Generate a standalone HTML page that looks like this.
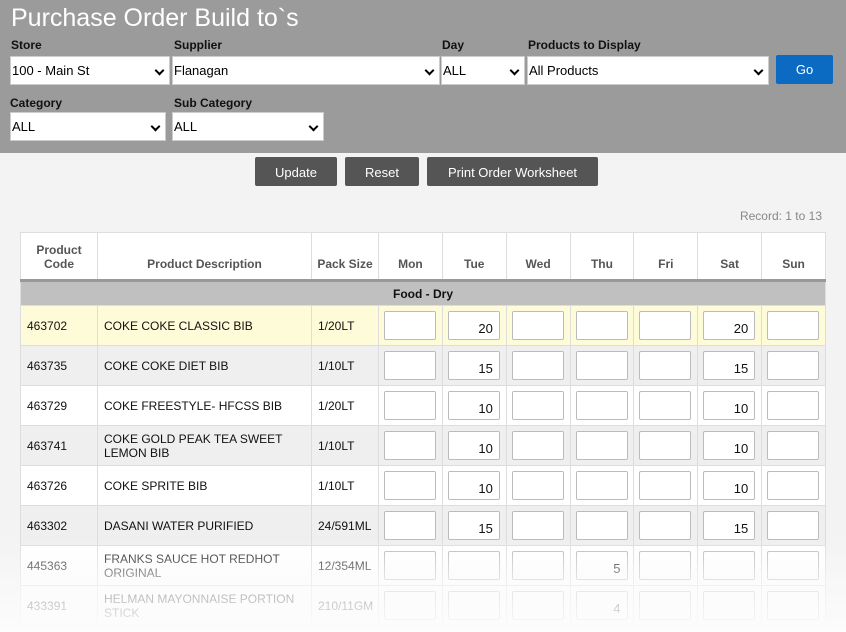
<!DOCTYPE html>
<html><head><style>
*{box-sizing:border-box;margin:0;padding:0}
body{width:846px;height:632px;overflow:hidden;background:#f3f3f3;font-family:"Liberation Sans",Arial,sans-serif;position:relative}
.hd{position:absolute;left:0;top:0;width:846px;height:153px;background:#9b9b9b}
.t{position:absolute;left:11px;top:4px;font-size:25px;color:#fff}
.l{position:absolute;font-size:12px;font-weight:bold;color:#111}
.s{position:absolute;background:#fff;border:1px solid #ccc;font-size:13px;padding:6px 0 0 1px;color:#000}
.s:after{content:"";position:absolute;right:6px;top:10px;width:5px;height:5px;border-right:2px solid #000;border-bottom:2px solid #000;transform:rotate(45deg)}
.b{position:absolute;background:#555;color:#fff;font-size:13px;text-align:center;line-height:31px;height:29px;border-radius:2px}
table{position:absolute;left:20px;top:232px;width:806px;border-collapse:collapse;font-size:12px;background:#fff}
td,th{border:1px solid #ddd;color:#111}
th{height:48px;color:#555;font-size:12px;vertical-align:bottom;padding-bottom:8px}
td{height:40px;padding-left:6px}
tr.g td{height:25px;background:#c0c0c0;text-align:center;font-weight:bold;border-top:3px solid #999;padding:0}
tr.a td{background:#efefef}
tr.y td{background:#fdfbd8}
td.i{padding:0 0 0 5px}
.in{width:52px;height:29px;border:1px solid #bbb;border-radius:2px;background:#fff;text-align:right;padding:9px 6px 0 0;font-size:13px}
.fade{position:absolute;left:0;top:540px;width:846px;height:92px;background:linear-gradient(rgba(250,250,250,0),rgba(250,250,250,.6) 40%,rgba(252,252,252,.97))}
</style></head><body>
<div class="hd">
<div class="t">Purchase Order Build to`s</div>
<div class="l" style="left:11px;top:38px">Store</div>
<div class="l" style="left:174px;top:38px">Supplier</div>
<div class="l" style="left:442px;top:38px">Day</div>
<div class="l" style="left:528px;top:38px">Products to Display</div>
<div class="s" style="left:10px;top:56px;width:160px;height:29px">100 - Main St</div>
<div class="s" style="left:172px;top:56px;width:268px;height:29px">Flanagan</div>
<div class="s" style="left:441px;top:56px;width:84px;height:29px">ALL</div>
<div class="s" style="left:527px;top:56px;width:242px;height:29px">All Products</div>
<div class="b" style="left:776px;top:55px;width:57px;height:29px;background:#0b6bc2;line-height:29px">Go</div>
<div class="l" style="left:10px;top:96px">Category</div>
<div class="l" style="left:174px;top:96px">Sub Category</div>
<div class="s" style="left:10px;top:112px;width:156px;height:29px">ALL</div>
<div class="s" style="left:172px;top:112px;width:152px;height:29px">ALL</div>
</div>
<div class="b" style="left:255px;top:157px;width:82px">Update</div>
<div class="b" style="left:345px;top:157px;width:74px">Reset</div>
<div class="b" style="left:427px;top:157px;width:171px">Print Order Worksheet</div>
<div style="position:absolute;right:24px;top:209px;font-size:12px;color:#888">Record: 1 to 13</div>
<table>
<tr><th style="width:77px">Product<br>Code</th><th style="width:214px">Product Description</th><th style="width:67px">Pack Size</th><th>Mon</th><th>Tue</th><th>Wed</th><th>Thu</th><th>Fri</th><th>Sat</th><th>Sun</th></tr>
<tr class="g"><td colspan="10">Food - Dry</td></tr>
<tr class="y"><td>463702</td><td>COKE COKE CLASSIC BIB</td><td>1/20LT</td><td class="i"><div class="in"></div></td><td class="i"><div class="in">20</div></td><td class="i"><div class="in"></div></td><td class="i"><div class="in"></div></td><td class="i"><div class="in"></div></td><td class="i"><div class="in">20</div></td><td class="i"><div class="in"></div></td></tr>
<tr class="a"><td>463735</td><td>COKE COKE DIET BIB</td><td>1/10LT</td><td class="i"><div class="in"></div></td><td class="i"><div class="in">15</div></td><td class="i"><div class="in"></div></td><td class="i"><div class="in"></div></td><td class="i"><div class="in"></div></td><td class="i"><div class="in">15</div></td><td class="i"><div class="in"></div></td></tr>
<tr><td>463729</td><td>COKE FREESTYLE- HFCSS BIB</td><td>1/20LT</td><td class="i"><div class="in"></div></td><td class="i"><div class="in">10</div></td><td class="i"><div class="in"></div></td><td class="i"><div class="in"></div></td><td class="i"><div class="in"></div></td><td class="i"><div class="in">10</div></td><td class="i"><div class="in"></div></td></tr>
<tr class="a"><td>463741</td><td>COKE GOLD PEAK TEA SWEET LEMON BIB</td><td>1/10LT</td><td class="i"><div class="in"></div></td><td class="i"><div class="in">10</div></td><td class="i"><div class="in"></div></td><td class="i"><div class="in"></div></td><td class="i"><div class="in"></div></td><td class="i"><div class="in">10</div></td><td class="i"><div class="in"></div></td></tr>
<tr><td>463726</td><td>COKE SPRITE BIB</td><td>1/10LT</td><td class="i"><div class="in"></div></td><td class="i"><div class="in">10</div></td><td class="i"><div class="in"></div></td><td class="i"><div class="in"></div></td><td class="i"><div class="in"></div></td><td class="i"><div class="in">10</div></td><td class="i"><div class="in"></div></td></tr>
<tr class="a"><td>463302</td><td>DASANI WATER PURIFIED</td><td>24/591ML</td><td class="i"><div class="in"></div></td><td class="i"><div class="in">15</div></td><td class="i"><div class="in"></div></td><td class="i"><div class="in"></div></td><td class="i"><div class="in"></div></td><td class="i"><div class="in">15</div></td><td class="i"><div class="in"></div></td></tr>
<tr><td>445363</td><td>FRANKS SAUCE HOT REDHOT ORIGINAL</td><td>12/354ML</td><td class="i"><div class="in"></div></td><td class="i"><div class="in"></div></td><td class="i"><div class="in"></div></td><td class="i"><div class="in">5</div></td><td class="i"><div class="in"></div></td><td class="i"><div class="in"></div></td><td class="i"><div class="in"></div></td></tr>
<tr><td>433391</td><td>HELMAN MAYONNAISE PORTION STICK</td><td>210/11GM</td><td class="i"><div class="in"></div></td><td class="i"><div class="in"></div></td><td class="i"><div class="in"></div></td><td class="i"><div class="in">4</div></td><td class="i"><div class="in"></div></td><td class="i"><div class="in"></div></td><td class="i"><div class="in"></div></td></tr>
</table>
<div class="fade"></div>
</body></html>
